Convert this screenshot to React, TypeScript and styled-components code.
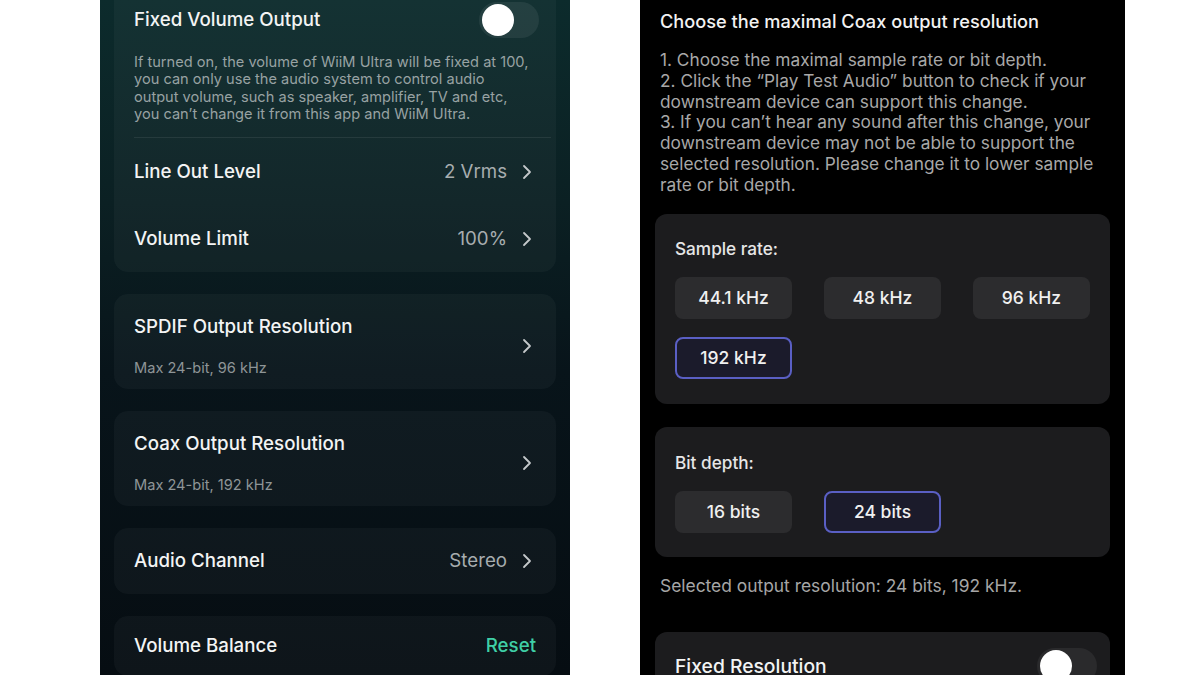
import React, { FC } from 'react'
import styled, { createGlobalStyle } from 'styled-components'

const GlobalStyle = createGlobalStyle`
  html, body {
    margin: 0;
    padding: 0;
    background: #ffffff;
  }
  body {
    font-family: Inter, "Noto Sans", "Liberation Sans", sans-serif;
    -webkit-font-smoothing: antialiased;
  }
`

const Chevron: FC = () => (
  <svg width="10" height="16" viewBox="0 0 10 16" fill="none">
    <path d="M2 2l6 6-6 6" stroke="#c4c8ca" strokeWidth="1.8" strokeLinecap="round" strokeLinejoin="round" />
  </svg>
)

interface IToggleProps {
  track: string
}

const Toggle: FC<IToggleProps> = ({ track }) => (
  <Track $track={track}>
    <Knob />
  </Track>
)

const App: FC = () => {
  return (
    <Page>
      <GlobalStyle />
      <LeftPhone>
        <Scroll>
          <Card>
            <ToggleRow>
              <Title>Fixed Volume Output</Title>
              <Toggle track="rgba(255,255,255,0.07)" />
            </ToggleRow>
            <Description>
              If turned on, the volume of WiiM Ultra will be fixed at 100,<br />
              you can only use the audio system to control audio<br />
              output volume, such as speaker, amplifier, TV and etc,<br />
              you can’t change it from this app and WiiM Ultra.
            </Description>
            <Divider />
            <Row $h={67}>
              <Title>Line Out Level</Title>
              <ValueWrap>
                <Value>2 Vrms</Value>
                <Chevron />
              </ValueWrap>
            </Row>
            <Row $h={67}>
              <Title>Volume Limit</Title>
              <ValueWrap>
                <Value>100%</Value>
                <Chevron />
              </ValueWrap>
            </Row>
          </Card>

          <Card>
            <TwoLineRow>
              <div>
                <Title>SPDIF Output Resolution</Title>
                <Sub>Max 24-bit, 96 kHz</Sub>
              </div>
              <Chevron />
            </TwoLineRow>
          </Card>

          <Card>
            <TwoLineRow>
              <div>
                <Title>Coax Output Resolution</Title>
                <Sub>Max 24-bit, 192 kHz</Sub>
              </div>
              <Chevron />
            </TwoLineRow>
          </Card>

          <Card>
            <Row $h={66}>
              <Title>Audio Channel</Title>
              <ValueWrap>
                <Value>Stereo</Value>
                <Chevron />
              </ValueWrap>
            </Row>
          </Card>

          <Card>
            <Row $h={60}>
              <Title>Volume Balance</Title>
              <Reset>Reset</Reset>
            </Row>
          </Card>
        </Scroll>
      </LeftPhone>

      <RightPhone>
        <Heading>Choose the maximal Coax output resolution</Heading>
        <Steps>
          1. Choose the maximal sample rate or bit depth.<br />
          2. Click the “Play Test Audio” button to check if your<br />
          downstream device can support this change.<br />
          3. If you can’t hear any sound after this change, your<br />
          downstream device may not be able to support the<br />
          selected resolution. Please change it to lower sample<br />
          rate or bit depth.
        </Steps>

        <DarkCard $pt={25} $pb={25}>
          <Label>Sample rate:</Label>
          <Options>
            <Option>44.1 kHz</Option>
            <Option>48 kHz</Option>
            <Option>96 kHz</Option>
            <Option $selected>192 kHz</Option>
          </Options>
        </DarkCard>

        <DarkCard $pt={26} $pb={24}>
          <Label>Bit depth:</Label>
          <Options>
            <Option>16 bits</Option>
            <Option $selected>24 bits</Option>
          </Options>
        </DarkCard>

        <Selected>Selected output resolution: 24 bits, 192 kHz.</Selected>

        <FixedCard>
          <Title $size={19.3}>Fixed Resolution</Title>
          <Toggle track="#2a2a2c" />
        </FixedCard>
      </RightPhone>
    </Page>
  )
}

export default App

const Page = styled.div`
  width: 1200px;
  height: 675px;
  overflow: hidden;
  background: #ffffff;
  display: flex;
  align-items: flex-start;
  padding-left: 100px;
  gap: 70px;
  box-sizing: border-box;
`
const LeftPhone = styled.div`
  width: 470px;
  height: 675px;
  overflow: hidden;
  background: linear-gradient(180deg, #0c2b2c 0%, #0b2023 30%, #08141a 55%, #060d12 100%);
  padding: 0 14px;
  box-sizing: border-box;
`
const Scroll = styled.div`
  margin-top: -13px;
  display: flex;
  flex-direction: column;
  gap: 22px;
`
const Card = styled.div`
  background: rgba(255, 255, 255, 0.035);
  border-radius: 14px;
  padding: 0 20px;
  display: flex;
  flex-direction: column;
`
const ToggleRow = styled.div`
  margin-top: 13px;
  margin-right: -3px;
  height: 40px;
  display: flex;
  align-items: center;
  justify-content: space-between;
`
const Title = styled.div<{ $size?: number }>`
  font-size: ${p => p.$size ?? 18.7}px;
  line-height: 22px;
  font-weight: 500;
  color: #f3f4f4;
  white-space: nowrap;
`
const Description = styled.div`
  margin-top: 14px;
  font-size: 14.6px;
  line-height: 17.3px;
  color: #98a2a3;
  white-space: nowrap;
`
const Divider = styled.div`
  margin-top: 14px;
  height: 1px;
  margin-right: -15px;
  background: rgba(255, 255, 255, 0.08);
`
const Row = styled.div<{ $h: number }>`
  height: ${p => p.$h}px;
  display: flex;
  align-items: center;
  justify-content: space-between;
`
const TwoLineRow = styled.div`
  display: flex;
  align-items: center;
  justify-content: space-between;
  padding: 22px 4px 13px 0;

  & > div {
    display: flex;
    flex-direction: column;
    gap: 22px;
  }
`
const ValueWrap = styled.div`
  display: flex;
  align-items: center;
  gap: 15px;
  padding-right: 4px;
`
const Value = styled.div`
  font-size: 18.7px;
  line-height: 22px;
  color: #a7adaf;
`
const Sub = styled.div`
  font-size: 14.6px;
  line-height: 16px;
  color: #8e9597;
`
const Reset = styled.div`
  font-size: 18.7px;
  line-height: 22px;
  font-weight: 500;
  color: #3fcfa6;
`
const Track = styled.div<{ $track: string }>`
  width: 60px;
  height: 36px;
  border-radius: 18px;
  background: ${p => p.$track};
  padding: 3px;
  box-sizing: border-box;
  display: flex;
  align-items: center;
`
const Knob = styled.div`
  width: 32px;
  height: 32px;
  border-radius: 50%;
  background: #ffffff;
`
const RightPhone = styled.div`
  width: 485px;
  height: 675px;
  overflow: hidden;
  background: #000000;
  padding: 0 15px;
  box-sizing: border-box;
  display: flex;
  flex-direction: column;
`
const Heading = styled.div`
  margin-top: 11px;
  padding-left: 5px;
  font-size: 18.2px;
  line-height: 20px;
  font-weight: 500;
  color: #f2f2f2;
  white-space: nowrap;
`
const Steps = styled.div`
  margin-top: 19px;
  padding-left: 5px;
  font-size: 17.3px;
  line-height: 20.8px;
  color: #a8a8a8;
  white-space: nowrap;
`
const DarkCard = styled.div<{ $pt: number; $pb: number }>`
  margin-top: 18px;
  background: #1c1c1e;
  border-radius: 12px;
  padding: ${p => p.$pt}px 20px ${p => p.$pb}px;
  & + & {
    margin-top: 23px;
  }
`
const Label = styled.div`
  font-size: 17.2px;
  line-height: 20px;
  font-weight: 500;
  color: #e6e6e6;
`
const Options = styled.div`
  margin-top: 18px;
  display: grid;
  grid-template-columns: repeat(3, 1fr);
  gap: 18px 32px;
`
const Option = styled.div<{ $selected?: boolean }>`
  height: 42px;
  border-radius: 8px;
  box-sizing: border-box;
  display: flex;
  align-items: center;
  justify-content: center;
  font-size: 17.5px;
  font-weight: 500;
  color: #f0f0f0;
  background: ${p => (p.$selected ? '#1b1b2b' : '#2c2c2e')};
  border: 2px solid ${p => (p.$selected ? '#5a5fc4' : 'transparent')};
`
const Selected = styled.div`
  margin-top: 19px;
  padding-left: 5px;
  font-size: 17.4px;
  line-height: 20px;
  color: #a6a6a6;
`
const FixedCard = styled.div`
  margin-top: 36px;
  background: #1c1c1e;
  border-radius: 12px;
  padding: 16px 13px 16px 20px;
  display: flex;
  align-items: center;
  justify-content: space-between;
`
